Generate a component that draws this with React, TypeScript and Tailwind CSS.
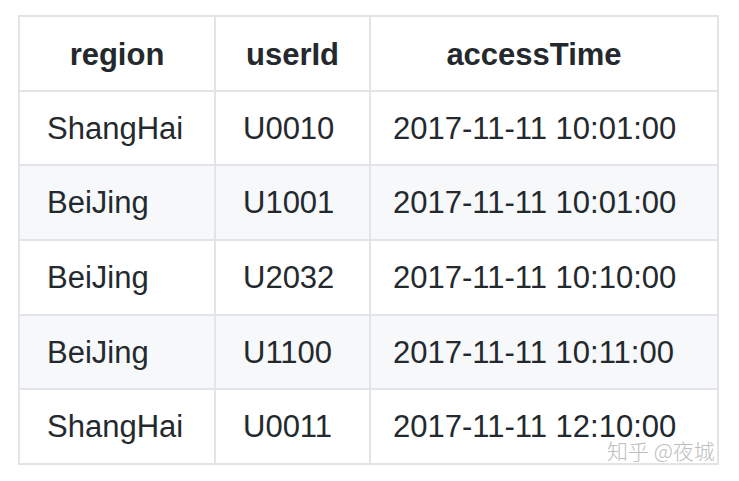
import React from "react";

const rows = [
  ["ShangHai", "U0010", "2017-11-11 10:01:00"],
  ["BeiJing", "U1001", "2017-11-11 10:01:00"],
  ["BeiJing", "U2032", "2017-11-11 10:10:00"],
  ["BeiJing", "U1100", "2017-11-11 10:11:00"],
  ["ShangHai", "U0011", "2017-11-11 12:10:00"],
];

export default function App() {
  return (
    <div
      className="relative w-[739px] h-[481px] bg-white overflow-hidden text-[#24292e]"
      style={{ fontFamily: '"Liberation Sans", Arial, sans-serif' }}
    >
      <div className="pt-[15px] pl-[18px]">
        <table className="table-fixed border-collapse text-[31px] leading-none">
          <colgroup>
            <col className="w-[196px]" />
            <col className="w-[155px]" />
            <col className="w-[348px]" />
          </colgroup>
          <thead>
            <tr className="h-[74.7px]">
              <th className="border-2 border-[#e2e4e8] font-bold text-center pt-[3px]">region</th>
              <th className="border-2 border-[#e2e4e8] font-bold text-center pt-[3px]">userId</th>
              <th className="border-2 border-[#e2e4e8] font-bold text-center pr-[20px] pt-[3px]">accessTime</th>
            </tr>
          </thead>
          <tbody>
            {rows.map((r, i) => (
              <tr key={i} className={`h-[74.7px] ${i % 2 === 1 ? "bg-[#f6f8fa]" : "bg-white"}`}>
                <td className="border-2 border-[#e2e4e8] pl-[27px] whitespace-nowrap">{r[0]}</td>
                <td className="border-2 border-[#e2e4e8] pl-[27px] whitespace-nowrap">{r[1]}</td>
                <td className="border-2 border-[#e2e4e8] pl-[22px] whitespace-nowrap">{r[2]}</td>
              </tr>
            ))}
          </tbody>
        </table>
      </div>
      <div
        className="absolute left-[607px] top-[440px] text-[21px] leading-none font-light text-[#bdbdbd] whitespace-nowrap"
        style={{ fontFamily: '"Noto Sans CJK SC", "Liberation Sans", sans-serif' }}
      >
        知乎 @夜城
      </div>
    </div>
  );
}
